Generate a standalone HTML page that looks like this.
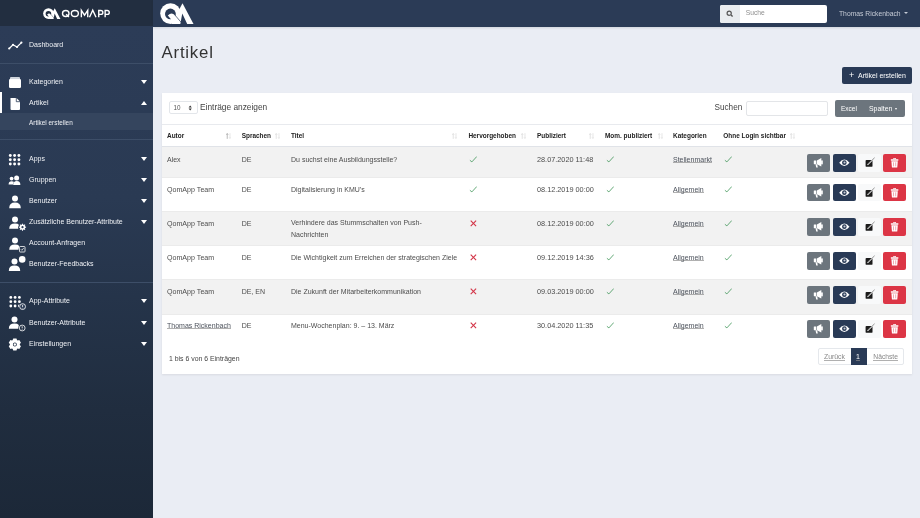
<!DOCTYPE html>
<html><head><meta charset="utf-8">
<style>
*{box-sizing:border-box;margin:0;padding:0}
html,body{width:920px;height:518px;overflow:hidden;background:#eaedf4;font-family:"Liberation Sans",sans-serif;color:#555}
.abs{position:absolute}
#sbh{left:0;top:0;width:153px;height:26px;background:#222e40}
#top{left:153px;top:0;width:767px;height:27px;background:#2b3b56;box-shadow:0 1px 2px rgba(30,40,60,.12)}
#sb{left:0;top:26px;width:153px;height:492px;background:linear-gradient(180deg,#2c3c57 0%,#2a3a53 35%,#25344a 55%,#202d3f 78%,#1c2838 100%)}
.si{position:absolute;left:29px;font-size:7px;color:#eef0f4;white-space:nowrap;line-height:8px}
.car{position:absolute;left:141px;width:0;height:0;border-left:3.5px solid transparent;border-right:3.5px solid transparent;border-top:4px solid #fff}
.carup{border-top:0;border-bottom:4px solid #fff}
.div{position:absolute;left:0;width:153px;height:1px;background:#3d4e68}
.ic{position:absolute;left:8px}
#title{left:161.5px;top:43px;font-size:16.8px;color:#333;line-height:20px;letter-spacing:0.8px}
#btnnew{left:842px;top:67px;width:70px;height:17px;background:#293a56;border-radius:2px;color:#fff;font-size:7px;line-height:17px;white-space:nowrap}
#card{left:162px;top:93px;width:750px;height:281px;background:#fff;box-shadow:0 1px 2px rgba(0,0,0,.08)}
.th{position:absolute;font-size:6.45px;font-weight:700;color:#222;white-space:nowrap;top:131.6px;line-height:8px}
.srt{position:absolute;top:131px;font-size:6px;color:#ccc;letter-spacing:-1px}
.row{position:absolute;left:162px;width:750px}
.td{position:absolute;font-size:7px;color:#4d4d4d;white-space:nowrap;line-height:9px}
.lnk{color:#4c525c;background:linear-gradient(#8c8c8c,#8c8c8c) 0 7.3px/100% 0.7px no-repeat}
.ok{position:absolute;width:8px;height:7px}
.bt{position:absolute;width:23px;height:17.5px;border-radius:2px}
.gs{position:absolute;left:0;top:0;width:920px;height:518px;will-change:transform}
</style></head><body><div class="gs">
<div id="sbh" class="abs"></div>
<div id="top" class="abs"></div>
<div id="sb" class="abs"></div>

<!-- sidebar logo -->
<svg class="abs" style="left:41.86px;top:6.96px" width="19.76" height="13" viewBox="0 0 38 25">
<circle cx="12.5" cy="12.6" r="10.3" fill="#fff"/>
<polygon points="24.5,2.2 35.5,22.9 13.5,22.9" fill="#fff"/>
<ellipse cx="12.4" cy="12.9" rx="5.4" ry="5.3" fill="#222e40"/>
<path d="M9.8,14.6 Q13.5,10.6 16.9,14.2 L23.4,22 L12.5,22 L13,18.3 Z" fill="#fff"/>
<path d="M16.9,14 L23.2,21.4" stroke="#222e40" stroke-width="0.7"/>
<polygon points="24.3,12.6 29.2,22.95 22.3,22.95" fill="#222e40"/>
</svg>
<svg class="abs" style="left:58px;top:6px" width="54" height="15" viewBox="0 0 54 15">
<g fill="none" stroke="#fff" stroke-width="1.4">
<ellipse cx="7.75" cy="7.5" rx="3.25" ry="3.0"/>
<path d="M8.2,8.2 L10.9,10.9"/>
<ellipse cx="16.85" cy="7.5" rx="3.5" ry="3.0"/>
<path d="M23.35,11.2 V4.4 L26.55,9.2 L29.75,4.4 V11.2"/>
<path d="M31.5,11.2 L34.75,4.1 L38,11.2"/>
<path d="M40.75,11.2 V4.5 H42.9 A1.95,1.95 0 0 1 42.9,8.4 H40.75"/>
<path d="M47.15,11.2 V4.5 H49.3 A1.95,1.95 0 0 1 49.3,8.4 H47.15"/>
</g>
</svg>
<!-- topbar logo -->
<svg class="abs" style="left:158px;top:1px" width="38" height="25" viewBox="0 0 38 25">
<circle cx="12.5" cy="12.6" r="10.3" fill="#fff"/>
<polygon points="24.5,2.2 35.5,22.9 13.5,22.9" fill="#fff"/>
<ellipse cx="12.4" cy="12.9" rx="5.4" ry="5.3" fill="#2b3b56"/>
<path d="M9.8,14.6 Q13.5,10.6 16.9,14.2 L23.4,22 L12.5,22 L13,18.3 Z" fill="#fff"/>
<path d="M16.9,14 L23.2,21.4" stroke="#2b3b56" stroke-width="0.7"/>
<polygon points="24.3,12.6 29.2,22.95 22.3,22.95" fill="#2b3b56"/>
</svg>

<!-- topbar search -->
<div class="abs" style="left:720px;top:5px;width:107px;height:17.5px;background:#fff;border-radius:2px"></div>
<div class="abs" style="left:720px;top:5px;width:20px;height:17.5px;background:#e9ecef;border-radius:2px 0 0 2px"></div>
<svg class="abs" style="left:726px;top:10px" width="8" height="8" viewBox="0 0 8 8"><circle cx="3.2" cy="3.2" r="2.1" fill="none" stroke="#555" stroke-width="1.2"/><path d="M4.8,4.8 L6.6,6.6" stroke="#555" stroke-width="1.4"/></svg>
<div class="abs" style="left:745.8px;top:9.4px;font-size:6.7px;color:#8e8e8e;line-height:8px">Suche</div>
<div class="abs" style="left:839px;top:9.6px;font-size:6.76px;color:#c6cbd6;line-height:8px;white-space:nowrap">Thomas Rickenbach</div>
<div class="abs" style="left:904.2px;top:12.2px;width:0;height:0;border-left:2.2px solid transparent;border-right:2.2px solid transparent;border-top:2.4px solid #c6cbd6"></div>

<!-- sidebar items -->
<svg class="ic" style="top:41px" width="15" height="9" viewBox="0 0 15 9"><path d="M1.2,7.5 L5,3.8 L9,6 L13.4,1.6" fill="none" stroke="#fff" stroke-width="1.2"/><circle cx="1.2" cy="7.5" r="1.1" fill="#fff"/><circle cx="5" cy="3.8" r="1.1" fill="#fff"/><circle cx="9" cy="6" r="1.1" fill="#fff"/><circle cx="13.4" cy="1.6" r="1.1" fill="#fff"/></svg>
<div class="si" style="top:41px">Dashboard</div>
<div class="div" style="top:63px"></div>

<svg class="ic" style="top:76px" width="15" height="13" viewBox="0 0 15 13"><rect x="2" y="1" width="10" height="3" rx="1" fill="#cfd4dc"/><rect x="1" y="3" width="12" height="9" rx="1.2" fill="#fff"/></svg>
<div class="si" style="top:78px">Kategorien</div>
<div class="car" style="top:80px"></div>

<div class="abs" style="left:0;top:92px;width:2px;height:21px;background:#fff"></div>
<svg class="ic" style="top:97px" width="15" height="14" viewBox="0 0 15 14"><path d="M2.5,1 H8.5 L12,4.5 V12 Q12,13 11,13 H3.5 Q2.5,13 2.5,12 Z" fill="#fff"/><path d="M8.3,1 V4.7 H12" fill="none" stroke="#2c3c57" stroke-width="0.8"/></svg>
<div class="si" style="top:99px">Artikel</div>
<div class="car carup" style="top:101px"></div>
<div class="abs" style="left:0;top:113px;width:153px;height:17px;background:#35455e"></div>
<div class="si" style="top:118.6px;font-size:6.4px">Artikel erstellen</div>
<div class="div" style="top:139px"></div>

<svg class="ic" style="top:154px" width="14" height="12" viewBox="0 0 14 12"><g fill="#fff"><circle cx="2.3" cy="1.5" r="1.45"/><circle cx="6.6" cy="1.5" r="1.45"/><circle cx="10.9" cy="1.5" r="1.45"/><circle cx="2.3" cy="5.8" r="1.45"/><circle cx="6.6" cy="5.8" r="1.45"/><circle cx="10.9" cy="5.8" r="1.45"/><circle cx="2.3" cy="10" r="1.45"/><circle cx="6.6" cy="10" r="1.45"/><circle cx="10.9" cy="10" r="1.45"/></g></svg>
<div class="si" style="top:155px">Apps</div>
<div class="car" style="top:157px"></div>

<svg class="ic" style="top:175px" width="15" height="11" viewBox="0 0 15 11"><g fill="#fff"><circle cx="3.6" cy="3.6" r="1.9"/><path d="M0.6,9.4 Q0.6,6.3 3.6,6.3 Q5.3,6.3 6,7 Q5.2,8 5.2,9.4 Z"/><circle cx="8.6" cy="3" r="2.5"/><path d="M5.2,10 Q5.2,6.1 8.8,6.1 Q12.4,6.1 12.4,10 Z"/></g></svg>
<div class="si" style="top:176px">Gruppen</div>
<div class="car" style="top:178px"></div>

<svg class="ic" style="top:194.6px" width="15" height="14" viewBox="0 0 15 14"><g fill="#fff"><circle cx="7" cy="3.5" r="3"/><path d="M1.2,13.2 Q1.2,7.6 7,7.6 Q12.8,7.6 12.8,13.2 Z"/></g></svg>
<div class="si" style="top:197px">Benutzer</div>
<div class="car" style="top:199px"></div>

<svg class="ic" style="top:216px" width="19" height="17" viewBox="0 0 19 17"><g fill="#fff"><circle cx="7" cy="3.5" r="3"/><path d="M1.2,12.8 Q1.2,7.6 7,7.6 Q10,7.6 11.2,9 L10.5,12.8 Z"/></g><circle cx="14.5" cy="11.2" r="4.3" fill="#2b3b55"/><path fill="#fff" fill-rule="evenodd" d="M17.14,10.62 L18.07,10.71 L18.07,11.69 L17.14,11.78 L16.77,12.66 L17.37,13.37 L16.67,14.07 L15.96,13.47 L15.08,13.84 L14.99,14.77 L14.01,14.77 L13.92,13.84 L13.04,13.47 L12.33,14.07 L11.63,13.37 L12.23,12.66 L11.86,11.78 L10.93,11.69 L10.93,10.71 L11.86,10.62 L12.23,9.74 L11.63,9.03 L12.33,8.33 L13.04,8.93 L13.92,8.56 L14.01,7.63 L14.99,7.63 L15.08,8.56 L15.96,8.93 L16.67,8.33 L17.37,9.03 L16.77,9.74 Z M15.60,11.20 A1.1,1.1 0 1 0 13.40,11.20 A1.1,1.1 0 1 0 15.60,11.20 Z"/></svg>
<div class="si" style="top:218px">Zusätzliche Benutzer-Attribute</div>
<div class="car" style="top:220px"></div>

<svg class="ic" style="top:237.2px" width="19" height="17" viewBox="0 0 19 17"><g fill="#fff"><circle cx="7" cy="3.5" r="3"/><path d="M1.2,12.8 Q1.2,7.6 7,7.6 Q10,7.6 11.2,9 L10.5,12.8 Z"/></g><rect x="11.5" y="9.5" width="5.5" height="5.5" rx="0.7" fill="none" stroke="#fff" stroke-width="0.8"/><path d="M12.8,12.2 L13.9,13.3 L15.8,10.9" fill="none" stroke="#fff" stroke-width="0.7"/></svg>
<div class="si" style="top:239px">Account-Anfragen</div>

<svg class="ic" style="top:256px" width="19" height="17" viewBox="0 0 19 17"><g fill="#fff"><circle cx="6.5" cy="5.5" r="3"/><path d="M0.8,15 Q0.8,9.6 6.5,9.6 Q12.2,9.6 12.2,15 Z"/><circle cx="14.2" cy="3.4" r="3.3"/></g></svg>
<div class="si" style="top:260px">Benutzer-Feedbacks</div>
<div class="div" style="top:282px"></div>

<svg class="ic" style="top:295px" width="19" height="17" viewBox="0 0 19 17"><g fill="#fff"><circle cx="2.8" cy="2.4" r="1.4"/><circle cx="7.1" cy="2.4" r="1.4"/><circle cx="11.4" cy="2.4" r="1.4"/><circle cx="2.8" cy="6.7" r="1.4"/><circle cx="7.1" cy="6.7" r="1.4"/><circle cx="11.4" cy="6.7" r="1.4"/><circle cx="2.8" cy="11" r="1.4"/><circle cx="7.1" cy="11" r="1.4"/><circle cx="11.4" cy="11" r="1.4"/></g><circle cx="14.6" cy="11.6" r="3.7" fill="#2b3b55"/><circle cx="14.6" cy="11.6" r="2.9" fill="none" stroke="#fff" stroke-width="0.8"/><path d="M14.6,9.9 V12 M14.6,12.8 V13.4" stroke="#fff" stroke-width="0.8"/></svg>
<div class="si" style="top:297px">App-Attribute</div>
<div class="car" style="top:299px"></div>

<svg class="ic" style="top:316px" width="19" height="17" viewBox="0 0 19 17"><g fill="#fff"><circle cx="6.5" cy="3.5" r="3"/><path d="M0.8,12.8 Q0.8,7.6 6.5,7.6 Q9.5,7.6 10.8,9 L10.2,12.8 Z"/></g><circle cx="14.2" cy="12" r="2.9" fill="none" stroke="#fff" stroke-width="0.8"/><path d="M14.2,10.3 V12.4 M14.2,13.2 V13.8" stroke="#fff" stroke-width="0.8"/></svg>
<div class="si" style="top:319px">Benutzer-Attribute</div>
<div class="car" style="top:321px"></div>

<svg class="ic" style="top:338px" width="15" height="14" viewBox="0 0 15 14"><path fill="#fff" fill-rule="evenodd" d="M9.00,11.01 L8.48,12.59 L5.22,12.59 L4.70,11.01 L4.02,10.62 L2.40,10.95 L0.76,8.13 L1.87,6.89 L1.87,6.11 L0.76,4.87 L2.40,2.05 L4.02,2.38 L4.70,1.99 L5.22,0.41 L8.48,0.41 L9.00,1.99 L9.68,2.38 L11.30,2.05 L12.94,4.87 L11.83,6.11 L11.83,6.89 L12.94,8.13 L11.30,10.95 L9.68,10.62 Z M8.85,6.50 A2.0,2.0 0 1 0 4.85,6.50 A2.0,2.0 0 1 0 8.85,6.50 Z"/><circle cx="6.85" cy="6.5" r="1.2" fill="#fff"/></svg>
<div class="si" style="top:340px">Einstellungen</div>
<div class="car" style="top:342px"></div>

<!-- main -->
<div id="title" class="abs">Artikel</div>
<div id="btnnew" class="abs"><span style="position:absolute;left:7px;top:0;font-size:9px">+</span><span style="position:absolute;left:16px">Artikel erstellen</span></div>

<div id="card" class="abs"></div>
<!-- length select -->
<div class="abs" style="left:168.5px;top:100.5px;width:29px;height:13.5px;border:1px solid #e3e6ea;border-radius:2px;background:#fff"></div>
<div class="abs" style="left:173.5px;top:104px;font-size:6.3px;color:#555;line-height:8px">10</div>
<svg class="abs" style="left:187.5px;top:104.5px" width="5" height="6" viewBox="0 0 5 6"><path d="M0.6,2.4 L2.2,0.4 L3.8,2.4 Z M0.6,3.5 L2.2,5.5 L3.8,3.5 Z" fill="#333"/></svg>
<div class="abs" style="left:200px;top:102px;font-size:8.35px;color:#444;line-height:10px;white-space:nowrap">Einträge anzeigen</div>
<div class="abs" style="left:714.5px;top:103px;font-size:8.2px;color:#444;line-height:10px">Suchen</div>
<div class="abs" style="left:745.5px;top:101.4px;width:82px;height:14.2px;border:1px solid #e3e5e8;border-radius:2px;background:#fff"></div>
<div class="abs" style="left:835px;top:100.3px;width:69.5px;height:17.1px;background:#6c757d;border-radius:2px"></div>
<div class="abs" style="left:841px;top:105.2px;font-size:6.5px;color:#fff;line-height:8px">Excel</div>
<div class="abs" style="left:869px;top:105.2px;font-size:6.9px;color:#fff;line-height:8px">Spalten</div>
<div class="abs" style="left:894.6px;top:107.7px;width:0;height:0;border-left:1.6px solid transparent;border-right:1.6px solid transparent;border-top:2.2px solid #fff"></div>

<!-- table header -->
<div class="abs" style="left:162px;top:124px;width:750px;height:1px;background:#e8eaee"></div>
<div class="abs" style="left:162px;top:146px;width:750px;height:1px;background:#e0e3e8"></div>
<div class="th" style="left:167px">Autor</div>
<div class="th" style="left:241.7px">Sprachen</div>
<div class="th" style="left:291px">Titel</div>
<div class="th" style="left:468.4px">Hervorgehoben</div>
<div class="th" style="left:537px">Publiziert</div>
<div class="th" style="left:605px">Mom. publiziert</div>
<div class="th" style="left:673px">Kategorien</div>
<div class="th" style="left:723.3px">Ohne Login sichtbar</div>

<svg class="abs" style="left:225.7px;top:133px" width="5.4" height="6" viewBox="0 0 6 7"><path d="M1.3,6.8 V0.8 M0.2,2 L1.3,0.6 L2.4,2" fill="none" stroke="#9a9a9a" stroke-width="0.8"/><path d="M4.5,0.2 V6.2 M3.4,5 L4.5,6.4 L5.6,5" fill="none" stroke="#dcdcdc" stroke-width="0.8"/></svg>
<svg class="abs" style="left:275px;top:133px" width="5.4" height="6" viewBox="0 0 6 7"><path d="M1.3,6.8 V0.8 M0.2,2 L1.3,0.6 L2.4,2" fill="none" stroke="#d6d6d6" stroke-width="0.8"/><path d="M4.5,0.2 V6.2 M3.4,5 L4.5,6.4 L5.6,5" fill="none" stroke="#dcdcdc" stroke-width="0.8"/></svg>
<svg class="abs" style="left:452px;top:133px" width="5.4" height="6" viewBox="0 0 6 7"><path d="M1.3,6.8 V0.8 M0.2,2 L1.3,0.6 L2.4,2" fill="none" stroke="#d6d6d6" stroke-width="0.8"/><path d="M4.5,0.2 V6.2 M3.4,5 L4.5,6.4 L5.6,5" fill="none" stroke="#dcdcdc" stroke-width="0.8"/></svg>
<svg class="abs" style="left:521px;top:133px" width="5.4" height="6" viewBox="0 0 6 7"><path d="M1.3,6.8 V0.8 M0.2,2 L1.3,0.6 L2.4,2" fill="none" stroke="#d6d6d6" stroke-width="0.8"/><path d="M4.5,0.2 V6.2 M3.4,5 L4.5,6.4 L5.6,5" fill="none" stroke="#dcdcdc" stroke-width="0.8"/></svg>
<svg class="abs" style="left:588.7px;top:133px" width="5.4" height="6" viewBox="0 0 6 7"><path d="M1.3,6.8 V0.8 M0.2,2 L1.3,0.6 L2.4,2" fill="none" stroke="#d6d6d6" stroke-width="0.8"/><path d="M4.5,0.2 V6.2 M3.4,5 L4.5,6.4 L5.6,5" fill="none" stroke="#dcdcdc" stroke-width="0.8"/></svg>
<svg class="abs" style="left:657.6px;top:133px" width="5.4" height="6" viewBox="0 0 6 7"><path d="M1.3,6.8 V0.8 M0.2,2 L1.3,0.6 L2.4,2" fill="none" stroke="#d6d6d6" stroke-width="0.8"/><path d="M4.5,0.2 V6.2 M3.4,5 L4.5,6.4 L5.6,5" fill="none" stroke="#dcdcdc" stroke-width="0.8"/></svg>
<svg class="abs" style="left:790px;top:133px" width="5.4" height="6" viewBox="0 0 6 7"><path d="M1.3,6.8 V0.8 M0.2,2 L1.3,0.6 L2.4,2" fill="none" stroke="#d6d6d6" stroke-width="0.8"/><path d="M4.5,0.2 V6.2 M3.4,5 L4.5,6.4 L5.6,5" fill="none" stroke="#dcdcdc" stroke-width="0.8"/></svg>
<div id="rows"></div>
<!-- rows -->
<div class="row" style="top:147px;height:30.5px;background:#f2f2f2"></div>
<div class="row" style="top:211px;height:34px;background:#f2f2f2"></div>
<div class="row" style="top:279px;height:34.5px;background:#f2f2f2"></div>
<div class="abs" style="left:162px;top:177px;width:750px;height:1px;background:#ebebeb"></div>
<div class="abs" style="left:162px;top:210.5px;width:750px;height:1px;background:#ebebeb"></div>
<div class="abs" style="left:162px;top:245px;width:750px;height:1px;background:#ebebeb"></div>
<div class="abs" style="left:162px;top:278.5px;width:750px;height:1px;background:#ebebeb"></div>
<div class="abs" style="left:162px;top:313.5px;width:750px;height:1px;background:#ebebeb"></div>

<!--GEN-->
<div class="td" style="left:167px;top:154.8px">Alex</div>
<div class="td" style="left:241.7px;top:154.8px">DE</div>
<div class="td" style="left:291px;top:154.8px">Du suchst eine Ausbildungsstelle?</div>
<svg class="ok" style="left:469px;top:155.8px" width="8" height="7" viewBox="0 0 8 7"><path d="M0.9,4.3 L2.9,5.9 L7.8,0.5" fill="none" stroke="#3f9658" stroke-width="0.8"/></svg>
<div class="td" style="left:537px;top:154.8px;font-size:7.3px">28.07.2020 11:48</div>
<svg class="ok" style="left:605.6px;top:155.8px" width="8" height="7" viewBox="0 0 8 7"><path d="M0.9,4.3 L2.9,5.9 L7.8,0.5" fill="none" stroke="#3f9658" stroke-width="0.8"/></svg>
<div class="td lnk" style="left:673px;top:154.8px">Stellenmarkt</div>
<svg class="ok" style="left:724.1px;top:155.8px" width="8" height="7" viewBox="0 0 8 7"><path d="M0.9,4.3 L2.9,5.9 L7.8,0.5" fill="none" stroke="#3f9658" stroke-width="0.8"/></svg>
<div class="bt" style="left:807px;top:154.2px;background:#6c757d"></div>
<svg class="abs" style="left:807px;top:154.2px" width="23" height="18" viewBox="0 0 23 17.5"><g fill="#fff"><rect x="6.8" y="6.3" width="2.5" height="3.6" rx="0.3"/><path d="M8.5,9.9 H10.2 L10.8,13.3 H9.2 Z"/><path d="M9.9,6.3 L14.3,3.8 V12.3 L9.9,9.9 Z"/><rect x="14.1" y="5.9" width="1.7" height="4.3" rx="0.8"/></g></svg>
<div class="bt" style="left:832.5px;top:154.2px;background:#293a56"></div>
<svg class="abs" style="left:832.5px;top:154.2px" width="23" height="18" viewBox="0 0 23 17.5"><path fill="#fff" d="M6.2,8.4 Q11.35,1.9 16.5,8.4 Q11.35,14.9 6.2,8.4 Z"/><circle cx="11.35" cy="8.4" r="2.3" fill="#293a56"/><circle cx="11.5" cy="8.3" r="1.05" fill="#c9ced8"/></svg>
<div class="bt" style="left:857.5px;top:154.2px;background:#f8f9fa"></div>
<svg class="abs" style="left:857.5px;top:154.2px" width="23" height="18" viewBox="0 0 23 17.5"><rect x="7.6" y="5.7" width="6.9" height="6.9" rx="0.9" fill="#1b1b1b"/><path d="M9.5,10.6 L16.6,3.6" stroke="#f8f9fa" stroke-width="1.3"/><path d="M9.6,10.4 L16.6,3.5" stroke="#3a3a3a" stroke-width="0.55"/></svg>
<div class="bt" style="left:883px;top:154.2px;background:#dc3545"></div>
<svg class="abs" style="left:883px;top:154.2px" width="23" height="18" viewBox="0 0 23 17.5"><g fill="#fff"><path d="M10,5 Q10,3.7 11.2,3.7 H12 Q13.2,3.7 13.2,5 H12.5 Q12.5,4.4 11.9,4.4 H11.3 Q10.7,4.4 10.7,5 Z"/><rect x="7.8" y="4.9" width="7.6" height="1.5" rx="0.4"/><path d="M8.4,6.9 H14.8 L14.3,12.9 Q14.2,13.3 13.8,13.3 H9.4 Q9,13.3 8.9,12.9 Z"/></g><path d="M10.5,8.1 V12.1 M12.7,8.1 V12.1" stroke="#e8848e" stroke-width="0.7"/></svg>
<div class="td" style="left:167px;top:185.7px;font-size:7.1px">QomApp Team</div>
<div class="td" style="left:241.7px;top:184.7px">DE</div>
<div class="td" style="left:291px;top:184.7px">Digitalisierung in KMU's</div>
<svg class="ok" style="left:469px;top:185.7px" width="8" height="7" viewBox="0 0 8 7"><path d="M0.9,4.3 L2.9,5.9 L7.8,0.5" fill="none" stroke="#3f9658" stroke-width="0.8"/></svg>
<div class="td" style="left:537px;top:184.7px;font-size:7.3px">08.12.2019 00:00</div>
<svg class="ok" style="left:605.6px;top:185.7px" width="8" height="7" viewBox="0 0 8 7"><path d="M0.9,4.3 L2.9,5.9 L7.8,0.5" fill="none" stroke="#3f9658" stroke-width="0.8"/></svg>
<div class="td lnk" style="left:673px;top:184.7px">Allgemein</div>
<svg class="ok" style="left:724.1px;top:185.7px" width="8" height="7" viewBox="0 0 8 7"><path d="M0.9,4.3 L2.9,5.9 L7.8,0.5" fill="none" stroke="#3f9658" stroke-width="0.8"/></svg>
<div class="bt" style="left:807px;top:183.7px;background:#6c757d"></div>
<svg class="abs" style="left:807px;top:183.7px" width="23" height="18" viewBox="0 0 23 17.5"><g fill="#fff"><rect x="6.8" y="6.3" width="2.5" height="3.6" rx="0.3"/><path d="M8.5,9.9 H10.2 L10.8,13.3 H9.2 Z"/><path d="M9.9,6.3 L14.3,3.8 V12.3 L9.9,9.9 Z"/><rect x="14.1" y="5.9" width="1.7" height="4.3" rx="0.8"/></g></svg>
<div class="bt" style="left:832.5px;top:183.7px;background:#293a56"></div>
<svg class="abs" style="left:832.5px;top:183.7px" width="23" height="18" viewBox="0 0 23 17.5"><path fill="#fff" d="M6.2,8.4 Q11.35,1.9 16.5,8.4 Q11.35,14.9 6.2,8.4 Z"/><circle cx="11.35" cy="8.4" r="2.3" fill="#293a56"/><circle cx="11.5" cy="8.3" r="1.05" fill="#c9ced8"/></svg>
<div class="bt" style="left:857.5px;top:183.7px;background:#f8f9fa"></div>
<svg class="abs" style="left:857.5px;top:183.7px" width="23" height="18" viewBox="0 0 23 17.5"><rect x="7.6" y="5.7" width="6.9" height="6.9" rx="0.9" fill="#1b1b1b"/><path d="M9.5,10.6 L16.6,3.6" stroke="#f8f9fa" stroke-width="1.3"/><path d="M9.6,10.4 L16.6,3.5" stroke="#3a3a3a" stroke-width="0.55"/></svg>
<div class="bt" style="left:883px;top:183.7px;background:#dc3545"></div>
<svg class="abs" style="left:883px;top:183.7px" width="23" height="18" viewBox="0 0 23 17.5"><g fill="#fff"><path d="M10,5 Q10,3.7 11.2,3.7 H12 Q13.2,3.7 13.2,5 H12.5 Q12.5,4.4 11.9,4.4 H11.3 Q10.7,4.4 10.7,5 Z"/><rect x="7.8" y="4.9" width="7.6" height="1.5" rx="0.4"/><path d="M8.4,6.9 H14.8 L14.3,12.9 Q14.2,13.3 13.8,13.3 H9.4 Q9,13.3 8.9,12.9 Z"/></g><path d="M10.5,8.1 V12.1 M12.7,8.1 V12.1" stroke="#e8848e" stroke-width="0.7"/></svg>
<div class="td" style="left:167px;top:219.5px;font-size:7.1px">QomApp Team</div>
<div class="td" style="left:241.7px;top:218.5px">DE</div>
<div class="td" style="left:291px;top:218.5px;line-height:11.3px;margin-top:-1.15px">Verhindere das Stummschalten von Push-<br>Nachrichten</div>
<svg class="ok" style="left:469px;top:219.5px" width="8" height="7" viewBox="0 0 8 7"><path d="M1.7,0.7 L7.1,6.1 M7.1,0.7 L1.7,6.1" fill="none" stroke="#d33548" stroke-width="1.1"/></svg>
<div class="td" style="left:537px;top:218.5px;font-size:7.3px">08.12.2019 00:00</div>
<svg class="ok" style="left:605.6px;top:219.5px" width="8" height="7" viewBox="0 0 8 7"><path d="M0.9,4.3 L2.9,5.9 L7.8,0.5" fill="none" stroke="#3f9658" stroke-width="0.8"/></svg>
<div class="td lnk" style="left:673px;top:218.5px">Allgemein</div>
<svg class="ok" style="left:724.1px;top:219.5px" width="8" height="7" viewBox="0 0 8 7"><path d="M0.9,4.3 L2.9,5.9 L7.8,0.5" fill="none" stroke="#3f9658" stroke-width="0.8"/></svg>
<div class="bt" style="left:807px;top:218px;background:#6c757d"></div>
<svg class="abs" style="left:807px;top:218px" width="23" height="18" viewBox="0 0 23 17.5"><g fill="#fff"><rect x="6.8" y="6.3" width="2.5" height="3.6" rx="0.3"/><path d="M8.5,9.9 H10.2 L10.8,13.3 H9.2 Z"/><path d="M9.9,6.3 L14.3,3.8 V12.3 L9.9,9.9 Z"/><rect x="14.1" y="5.9" width="1.7" height="4.3" rx="0.8"/></g></svg>
<div class="bt" style="left:832.5px;top:218px;background:#293a56"></div>
<svg class="abs" style="left:832.5px;top:218px" width="23" height="18" viewBox="0 0 23 17.5"><path fill="#fff" d="M6.2,8.4 Q11.35,1.9 16.5,8.4 Q11.35,14.9 6.2,8.4 Z"/><circle cx="11.35" cy="8.4" r="2.3" fill="#293a56"/><circle cx="11.5" cy="8.3" r="1.05" fill="#c9ced8"/></svg>
<div class="bt" style="left:857.5px;top:218px;background:#f8f9fa"></div>
<svg class="abs" style="left:857.5px;top:218px" width="23" height="18" viewBox="0 0 23 17.5"><rect x="7.6" y="5.7" width="6.9" height="6.9" rx="0.9" fill="#1b1b1b"/><path d="M9.5,10.6 L16.6,3.6" stroke="#f8f9fa" stroke-width="1.3"/><path d="M9.6,10.4 L16.6,3.5" stroke="#3a3a3a" stroke-width="0.55"/></svg>
<div class="bt" style="left:883px;top:218px;background:#dc3545"></div>
<svg class="abs" style="left:883px;top:218px" width="23" height="18" viewBox="0 0 23 17.5"><g fill="#fff"><path d="M10,5 Q10,3.7 11.2,3.7 H12 Q13.2,3.7 13.2,5 H12.5 Q12.5,4.4 11.9,4.4 H11.3 Q10.7,4.4 10.7,5 Z"/><rect x="7.8" y="4.9" width="7.6" height="1.5" rx="0.4"/><path d="M8.4,6.9 H14.8 L14.3,12.9 Q14.2,13.3 13.8,13.3 H9.4 Q9,13.3 8.9,12.9 Z"/></g><path d="M10.5,8.1 V12.1 M12.7,8.1 V12.1" stroke="#e8848e" stroke-width="0.7"/></svg>
<div class="td" style="left:167px;top:254.0px;font-size:7.1px">QomApp Team</div>
<div class="td" style="left:241.7px;top:253.0px">DE</div>
<div class="td" style="left:291px;top:253.0px">Die Wichtigkeit zum Erreichen der strategischen Ziele</div>
<svg class="ok" style="left:469px;top:254.0px" width="8" height="7" viewBox="0 0 8 7"><path d="M1.7,0.7 L7.1,6.1 M7.1,0.7 L1.7,6.1" fill="none" stroke="#d33548" stroke-width="1.1"/></svg>
<div class="td" style="left:537px;top:253.0px;font-size:7.3px">09.12.2019 14:36</div>
<svg class="ok" style="left:605.6px;top:254.0px" width="8" height="7" viewBox="0 0 8 7"><path d="M0.9,4.3 L2.9,5.9 L7.8,0.5" fill="none" stroke="#3f9658" stroke-width="0.8"/></svg>
<div class="td lnk" style="left:673px;top:253.0px">Allgemein</div>
<svg class="ok" style="left:724.1px;top:254.0px" width="8" height="7" viewBox="0 0 8 7"><path d="M0.9,4.3 L2.9,5.9 L7.8,0.5" fill="none" stroke="#3f9658" stroke-width="0.8"/></svg>
<div class="bt" style="left:807px;top:252px;background:#6c757d"></div>
<svg class="abs" style="left:807px;top:252px" width="23" height="18" viewBox="0 0 23 17.5"><g fill="#fff"><rect x="6.8" y="6.3" width="2.5" height="3.6" rx="0.3"/><path d="M8.5,9.9 H10.2 L10.8,13.3 H9.2 Z"/><path d="M9.9,6.3 L14.3,3.8 V12.3 L9.9,9.9 Z"/><rect x="14.1" y="5.9" width="1.7" height="4.3" rx="0.8"/></g></svg>
<div class="bt" style="left:832.5px;top:252px;background:#293a56"></div>
<svg class="abs" style="left:832.5px;top:252px" width="23" height="18" viewBox="0 0 23 17.5"><path fill="#fff" d="M6.2,8.4 Q11.35,1.9 16.5,8.4 Q11.35,14.9 6.2,8.4 Z"/><circle cx="11.35" cy="8.4" r="2.3" fill="#293a56"/><circle cx="11.5" cy="8.3" r="1.05" fill="#c9ced8"/></svg>
<div class="bt" style="left:857.5px;top:252px;background:#f8f9fa"></div>
<svg class="abs" style="left:857.5px;top:252px" width="23" height="18" viewBox="0 0 23 17.5"><rect x="7.6" y="5.7" width="6.9" height="6.9" rx="0.9" fill="#1b1b1b"/><path d="M9.5,10.6 L16.6,3.6" stroke="#f8f9fa" stroke-width="1.3"/><path d="M9.6,10.4 L16.6,3.5" stroke="#3a3a3a" stroke-width="0.55"/></svg>
<div class="bt" style="left:883px;top:252px;background:#dc3545"></div>
<svg class="abs" style="left:883px;top:252px" width="23" height="18" viewBox="0 0 23 17.5"><g fill="#fff"><path d="M10,5 Q10,3.7 11.2,3.7 H12 Q13.2,3.7 13.2,5 H12.5 Q12.5,4.4 11.9,4.4 H11.3 Q10.7,4.4 10.7,5 Z"/><rect x="7.8" y="4.9" width="7.6" height="1.5" rx="0.4"/><path d="M8.4,6.9 H14.8 L14.3,12.9 Q14.2,13.3 13.8,13.3 H9.4 Q9,13.3 8.9,12.9 Z"/></g><path d="M10.5,8.1 V12.1 M12.7,8.1 V12.1" stroke="#e8848e" stroke-width="0.7"/></svg>
<div class="td" style="left:167px;top:287.9px;font-size:7.1px">QomApp Team</div>
<div class="td" style="left:241.7px;top:286.9px">DE, EN</div>
<div class="td" style="left:291px;top:286.9px">Die Zukunft der Mitarbeiterkommunikation</div>
<svg class="ok" style="left:469px;top:287.9px" width="8" height="7" viewBox="0 0 8 7"><path d="M1.7,0.7 L7.1,6.1 M7.1,0.7 L1.7,6.1" fill="none" stroke="#d33548" stroke-width="1.1"/></svg>
<div class="td" style="left:537px;top:286.9px;font-size:7.3px">09.03.2019 00:00</div>
<svg class="ok" style="left:605.6px;top:287.9px" width="8" height="7" viewBox="0 0 8 7"><path d="M0.9,4.3 L2.9,5.9 L7.8,0.5" fill="none" stroke="#3f9658" stroke-width="0.8"/></svg>
<div class="td lnk" style="left:673px;top:286.9px">Allgemein</div>
<svg class="ok" style="left:724.1px;top:287.9px" width="8" height="7" viewBox="0 0 8 7"><path d="M0.9,4.3 L2.9,5.9 L7.8,0.5" fill="none" stroke="#3f9658" stroke-width="0.8"/></svg>
<div class="bt" style="left:807px;top:286px;background:#6c757d"></div>
<svg class="abs" style="left:807px;top:286px" width="23" height="18" viewBox="0 0 23 17.5"><g fill="#fff"><rect x="6.8" y="6.3" width="2.5" height="3.6" rx="0.3"/><path d="M8.5,9.9 H10.2 L10.8,13.3 H9.2 Z"/><path d="M9.9,6.3 L14.3,3.8 V12.3 L9.9,9.9 Z"/><rect x="14.1" y="5.9" width="1.7" height="4.3" rx="0.8"/></g></svg>
<div class="bt" style="left:832.5px;top:286px;background:#293a56"></div>
<svg class="abs" style="left:832.5px;top:286px" width="23" height="18" viewBox="0 0 23 17.5"><path fill="#fff" d="M6.2,8.4 Q11.35,1.9 16.5,8.4 Q11.35,14.9 6.2,8.4 Z"/><circle cx="11.35" cy="8.4" r="2.3" fill="#293a56"/><circle cx="11.5" cy="8.3" r="1.05" fill="#c9ced8"/></svg>
<div class="bt" style="left:857.5px;top:286px;background:#f8f9fa"></div>
<svg class="abs" style="left:857.5px;top:286px" width="23" height="18" viewBox="0 0 23 17.5"><rect x="7.6" y="5.7" width="6.9" height="6.9" rx="0.9" fill="#1b1b1b"/><path d="M9.5,10.6 L16.6,3.6" stroke="#f8f9fa" stroke-width="1.3"/><path d="M9.6,10.4 L16.6,3.5" stroke="#3a3a3a" stroke-width="0.55"/></svg>
<div class="bt" style="left:883px;top:286px;background:#dc3545"></div>
<svg class="abs" style="left:883px;top:286px" width="23" height="18" viewBox="0 0 23 17.5"><g fill="#fff"><path d="M10,5 Q10,3.7 11.2,3.7 H12 Q13.2,3.7 13.2,5 H12.5 Q12.5,4.4 11.9,4.4 H11.3 Q10.7,4.4 10.7,5 Z"/><rect x="7.8" y="4.9" width="7.6" height="1.5" rx="0.4"/><path d="M8.4,6.9 H14.8 L14.3,12.9 Q14.2,13.3 13.8,13.3 H9.4 Q9,13.3 8.9,12.9 Z"/></g><path d="M10.5,8.1 V12.1 M12.7,8.1 V12.1" stroke="#e8848e" stroke-width="0.7"/></svg>
<div class="td lnk" style="left:167px;top:320.5px">Thomas Rickenbach</div>
<div class="td" style="left:241.7px;top:320.5px">DE</div>
<div class="td" style="left:291px;top:320.5px">Menu-Wochenplan: 9. – 13. März</div>
<svg class="ok" style="left:469px;top:321.5px" width="8" height="7" viewBox="0 0 8 7"><path d="M1.7,0.7 L7.1,6.1 M7.1,0.7 L1.7,6.1" fill="none" stroke="#d33548" stroke-width="1.1"/></svg>
<div class="td" style="left:537px;top:320.5px;font-size:7.3px">30.04.2020 11:35</div>
<svg class="ok" style="left:605.6px;top:321.5px" width="8" height="7" viewBox="0 0 8 7"><path d="M0.9,4.3 L2.9,5.9 L7.8,0.5" fill="none" stroke="#3f9658" stroke-width="0.8"/></svg>
<div class="td lnk" style="left:673px;top:320.5px">Allgemein</div>
<svg class="ok" style="left:724.1px;top:321.5px" width="8" height="7" viewBox="0 0 8 7"><path d="M0.9,4.3 L2.9,5.9 L7.8,0.5" fill="none" stroke="#3f9658" stroke-width="0.8"/></svg>
<div class="bt" style="left:807px;top:320.4px;background:#6c757d"></div>
<svg class="abs" style="left:807px;top:320.4px" width="23" height="18" viewBox="0 0 23 17.5"><g fill="#fff"><rect x="6.8" y="6.3" width="2.5" height="3.6" rx="0.3"/><path d="M8.5,9.9 H10.2 L10.8,13.3 H9.2 Z"/><path d="M9.9,6.3 L14.3,3.8 V12.3 L9.9,9.9 Z"/><rect x="14.1" y="5.9" width="1.7" height="4.3" rx="0.8"/></g></svg>
<div class="bt" style="left:832.5px;top:320.4px;background:#293a56"></div>
<svg class="abs" style="left:832.5px;top:320.4px" width="23" height="18" viewBox="0 0 23 17.5"><path fill="#fff" d="M6.2,8.4 Q11.35,1.9 16.5,8.4 Q11.35,14.9 6.2,8.4 Z"/><circle cx="11.35" cy="8.4" r="2.3" fill="#293a56"/><circle cx="11.5" cy="8.3" r="1.05" fill="#c9ced8"/></svg>
<div class="bt" style="left:857.5px;top:320.4px;background:#f8f9fa"></div>
<svg class="abs" style="left:857.5px;top:320.4px" width="23" height="18" viewBox="0 0 23 17.5"><rect x="7.6" y="5.7" width="6.9" height="6.9" rx="0.9" fill="#1b1b1b"/><path d="M9.5,10.6 L16.6,3.6" stroke="#f8f9fa" stroke-width="1.3"/><path d="M9.6,10.4 L16.6,3.5" stroke="#3a3a3a" stroke-width="0.55"/></svg>
<div class="bt" style="left:883px;top:320.4px;background:#dc3545"></div>
<svg class="abs" style="left:883px;top:320.4px" width="23" height="18" viewBox="0 0 23 17.5"><g fill="#fff"><path d="M10,5 Q10,3.7 11.2,3.7 H12 Q13.2,3.7 13.2,5 H12.5 Q12.5,4.4 11.9,4.4 H11.3 Q10.7,4.4 10.7,5 Z"/><rect x="7.8" y="4.9" width="7.6" height="1.5" rx="0.4"/><path d="M8.4,6.9 H14.8 L14.3,12.9 Q14.2,13.3 13.8,13.3 H9.4 Q9,13.3 8.9,12.9 Z"/></g><path d="M10.5,8.1 V12.1 M12.7,8.1 V12.1" stroke="#e8848e" stroke-width="0.7"/></svg>
<div class="abs" style="left:169px;top:354.5px;font-size:6.9px;color:#444;line-height:8px;white-space:nowrap">1 bis 6 von 6 Einträgen</div>
<div class="abs" style="left:818.3px;top:348px;width:86px;height:17.4px;border:1px solid #e5e8ec;border-radius:2px;background:#fff"></div>
<div class="abs" style="left:851px;top:348px;width:16.2px;height:17.4px;background:#293a56"></div>
<div class="abs lnk" style="left:824px;top:353.1px;background-position:0 6.6px;font-size:6.87px;color:#888;line-height:8px">Zurück</div>
<div class="abs lnk" style="left:856px;top:353.1px;background-position:0 6.6px;font-size:7px;color:#fff;line-height:8px">1</div>
<div class="abs lnk" style="left:873.3px;top:353.1px;background-position:0 6.6px;font-size:6.73px;color:#888;line-height:8px">Nächste</div>
</div></body></html>
